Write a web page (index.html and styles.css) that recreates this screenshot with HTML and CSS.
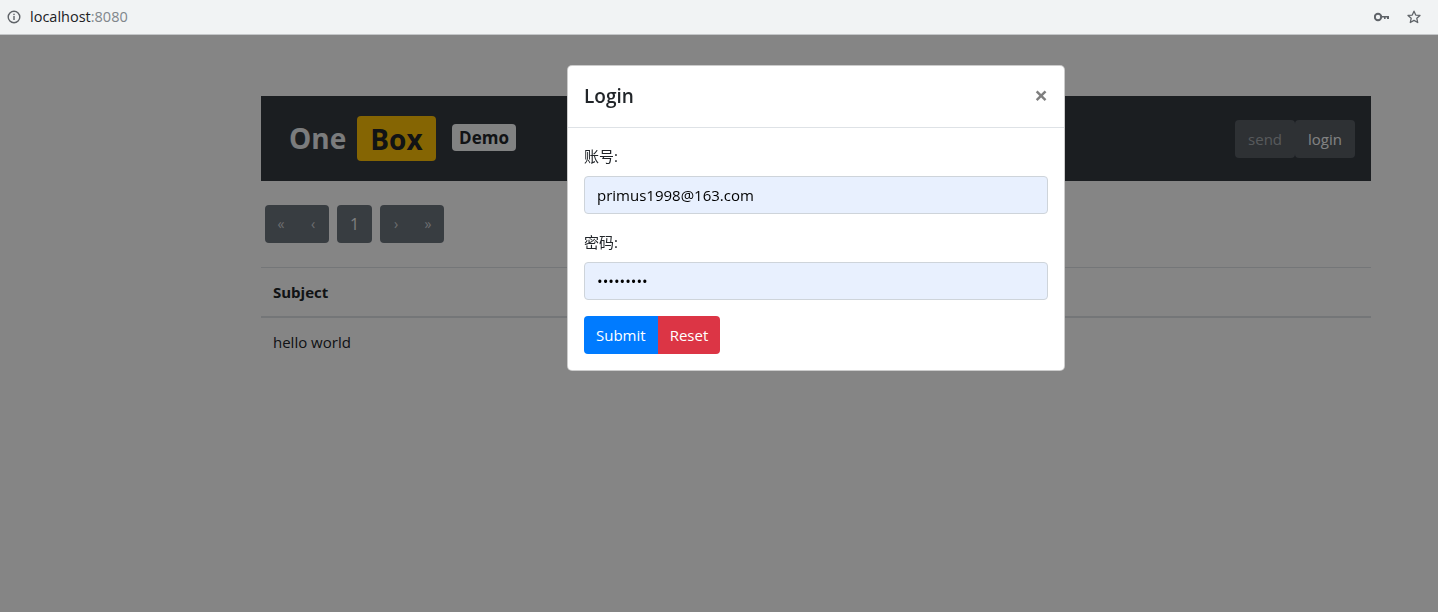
FILE: index.html
```html
<!DOCTYPE html>
<html lang="zh">
<head>
<meta charset="utf-8">
<title>OneBox</title>
<link rel="stylesheet" href="styles.css">
</head>
<body>
<div class="chrome">
  <div class="omnibox">
    <svg class="info" width="14" height="14" viewBox="0 0 14 14"><circle cx="7" cy="7" r="5.8" fill="none" stroke="#5f6368" stroke-width="1.4"/><rect x="6.3" y="6" width="1.4" height="4" fill="#5f6368"/><rect x="6.3" y="3.7" width="1.4" height="1.4" fill="#5f6368"/></svg>
    <span class="host">localhost</span><span class="port">:8080</span>
  </div>
  <div class="chrome-actions">
    <svg width="16" height="10" viewBox="0 0 16 10"><circle cx="4" cy="5" r="3.2" fill="none" stroke="#5f6368" stroke-width="2"/><path d="M7 4h8v3h-2v-1.6h-1.4v1.6h-1.6v-1.6h-3z" fill="#5f6368"/></svg>
    <svg width="16" height="16" viewBox="0 0 24 24"><path d="M12 3.2l2.6 5.9 6.4.6-4.8 4.3 1.4 6.3L12 17l-5.6 3.3 1.4-6.3L3 9.7l6.4-.6z" fill="none" stroke="#5f6368" stroke-width="1.9" stroke-linejoin="round"/></svg>
  </div>
</div>

<div class="stage">
  <div class="container">
    <nav class="navbar">
      <div class="brand">
        <span class="brand-one">One</span>
        <span class="badge badge-box">Box</span>
        <span class="badge badge-demo">Demo</span>
      </div>
      <div class="nav-btns">
        <button class="nbtn nbtn-send">send</button>
        <button class="nbtn nbtn-login">login</button>
      </div>
    </nav>

    <div class="pager">
      <div class="pgroup"><span class="pbtn arrow">«</span><span class="pbtn arrow">‹</span></div>
      <div class="pgroup"><span class="pbtn num">1</span></div>
      <div class="pgroup"><span class="pbtn arrow">›</span><span class="pbtn arrow">»</span></div>
    </div>

    <table class="table">
      <thead><tr><th>Subject</th></tr></thead>
      <tbody><tr><td>hello world</td></tr></tbody>
    </table>
  </div>

  <div class="backdrop"></div>

  <div class="modal-dialog">
    <div class="modal-content">
      <div class="modal-header">
        <h5 class="modal-title">Login</h5>
        <span class="close">×</span>
      </div>
      <div class="modal-body">
        <div class="form-group">
          <label class="label">账号:</label>
          <input class="form-control" type="text" value="primus1998@163.com">
        </div>
        <div class="form-group">
          <label class="label">密码:</label>
          <input class="form-control" type="password" value="123456789">
        </div>
        <div class="btn-group">
          <button class="btn btn-primary">Submit</button>
          <button class="btn btn-danger">Reset</button>
        </div>
      </div>
    </div>
  </div>
</div>
</body>
</html>
```

FILE: styles.css
```css
* { box-sizing: border-box; }
html, body { margin: 0; padding: 0; height: 100%; overflow: hidden; }
body {
  font-family: "Open Sans", "Noto Sans CJK SC", sans-serif;
  font-size: 15px;
  line-height: 24px;
  color: #212529;
  background: #fff;
}

.chrome {
  height: 35px;
  background: #f1f3f4;
  border-bottom: 1px solid #c4c6c8;
  display: flex;
  align-items: center;
  justify-content: space-between;
  padding: 0 16px 0 7px;
}
.omnibox { display: flex; align-items: center; font-size: 14.5px; }
.info { margin-right: 9px; }
.host { color: #202124; }
.port { color: #80868b; }
.chrome-actions { display: flex; align-items: center; gap: 16px; }

/* the page was laid out for a 1632px wide window; this frame shows its left part */
.stage { position: relative; width: 100%; height: calc(100% - 35px); }

.container { width: 1110px; margin-left: 261px; padding-top: 61px; }

.navbar {
  height: 85px;
  background: #343a40;
  display: flex;
  align-items: center;
  justify-content: space-between;
  padding: 0 16px 0 28px;
}
.brand { display: flex; align-items: center; font-weight: 700; }
.brand-one { font-size: 28px; line-height: 45px; color: #eceef0; margin-right: 11px; }
.badge { display: inline-block; line-height: 1; border-radius: 4px; font-weight: 700; }
.badge-box { font-size: 28px; padding: 8.5px 13px; background: #ffc107; color: #212529; margin-right: 16px; }
.badge-demo { font-size: 17px; padding: 5px 7.5px; background: #f8f9fa; color: #212529; margin-top: -2px; }

.nav-btns { display: flex; }
.nbtn {
  font: inherit;
  border: 0;
  border-radius: 4px;
  height: 38px;
  padding: 0 13px;
  background: #585e64;
  color: #f8f9fa;
}
.nbtn-send { color: #a8adb1; }

.pager { display: flex; gap: 8px; margin: 24px 0 24px 4px; }
.pgroup { display: flex; background: #6c757d; border-radius: 4px; height: 38px; }
.pbtn { display: flex; align-items: center; justify-content: center; color: #fff; }
.pbtn.arrow { width: 32px; font-size: 14px; color: #cfd2d5; }
.pbtn.num { width: 35px; font-size: 16px; color: #f2f2f2; }

.table { width: 100%; border-collapse: collapse; }
.table th, .table td { text-align: left; padding: 12px; border-top: 1px solid #dee2e6; }
.table th { font-weight: 700; border-bottom: 2px solid #dee2e6; }
.table td { border-top: 0; }

.backdrop { position: fixed; left: 0; right: 0; top: 35px; bottom: 0; background: rgba(0, 0, 0, 0.48); }

.modal-dialog {
  position: absolute;
  top: 30px;
  left: 567px;
  width: 498px;
}
.modal-content {
  background: #fff;
  border: 1px solid rgba(0, 0, 0, 0.2);
  border-radius: 5px;
}
.modal-header {
  display: flex;
  align-items: center;
  justify-content: space-between;
  padding: 15px 16px 16px;
  border-bottom: 1px solid #dee2e6;
}
.modal-title { margin: 0; font-size: 19px; line-height: 30px; font-weight: 600; }
.close { font-size: 24px; font-weight: 700; color: #000; opacity: 0.5; line-height: 1; margin-right: 0; margin-top: -3px; }
.modal-body { padding: 16px; }
.form-group { margin-bottom: 16px; }
.label { display: block; margin-bottom: 8px; }
.form-control {
  display: block;
  width: 100%;
  height: 38px;
  padding: 6px 12px;
  font: inherit;
  color: #000;
  background: #e8f0fe;
  border: 1px solid #ced4da;
  border-radius: 4px;
  outline: none;
}
.btn-group { display: flex; }
.btn {
  font: inherit;
  height: 38px;
  padding: 0 12px;
  border: 0;
  color: #fff;
}
.btn-primary { background: #007bff; border-radius: 4px 0 0 4px; }
.btn-danger { background: #dc3545; border-radius: 0 4px 4px 0; }
```
